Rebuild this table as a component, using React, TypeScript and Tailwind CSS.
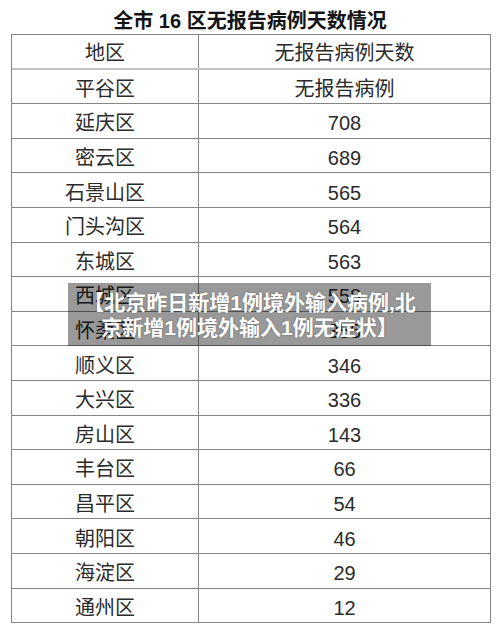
import React from "react";

const rows: [string, string][] = [
  ["平谷区", "无报告病例"],
  ["延庆区", "708"],
  ["密云区", "689"],
  ["石景山区", "565"],
  ["门头沟区", "564"],
  ["东城区", "563"],
  ["西城区", "558"],
  ["怀柔区", "355"],
  ["顺义区", "346"],
  ["大兴区", "336"],
  ["房山区", "143"],
  ["丰台区", "66"],
  ["昌平区", "54"],
  ["朝阳区", "46"],
  ["海淀区", "29"],
  ["通州区", "12"],
];

const font = { fontFamily: '"Liberation Sans", "Noto Sans CJK SC", sans-serif' };

export default function App() {
  return (
    <div
      className="relative w-[500px] h-[629px] bg-white overflow-hidden text-[#2b2b2b]"
      style={font}
    >
      <div className="h-[34px] flex items-center justify-center pt-[8px] text-[20px] font-bold text-[#141414] leading-none">
        全市 16 区无报告病例天数情况
      </div>
      <div className="ml-[11px] w-[480px] border-x border-t border-[#858585]">
        <div className="flex h-[34.6px] border-b-2 border-[#c2c2c2] text-[20px]">
          <div className="w-[187px] border-r border-[#858585] flex items-center justify-center pt-[4px]">
            地区
          </div>
          <div className="flex-1 flex items-center justify-center pt-[4px]">
            无报告病例天数
          </div>
        </div>
        {rows.map(([a, b], i) => (
          <div
            key={i}
            className="flex h-[34.6px] border-b border-[#858585] text-[20px]"
          >
            <div className="w-[187px] border-r border-[#858585] flex items-center justify-center pt-[5px]">
              {a}
            </div>
            <div className="flex-1 flex items-center justify-center pt-[5px]">
              {b}
            </div>
          </div>
        ))}
      </div>
      <div className="absolute left-[68px] top-[283px] w-[363px] h-[63px] bg-black/40 flex flex-col items-center justify-center text-white font-bold text-[21px] leading-[25px] whitespace-nowrap [text-shadow:0_0_2px_rgba(0,0,0,0.35)]">
        <div>【北京昨日新增1例境外输入病例,北</div>
        <div>京新增1例境外输入1例无症状】</div>
      </div>
    </div>
  );
}
